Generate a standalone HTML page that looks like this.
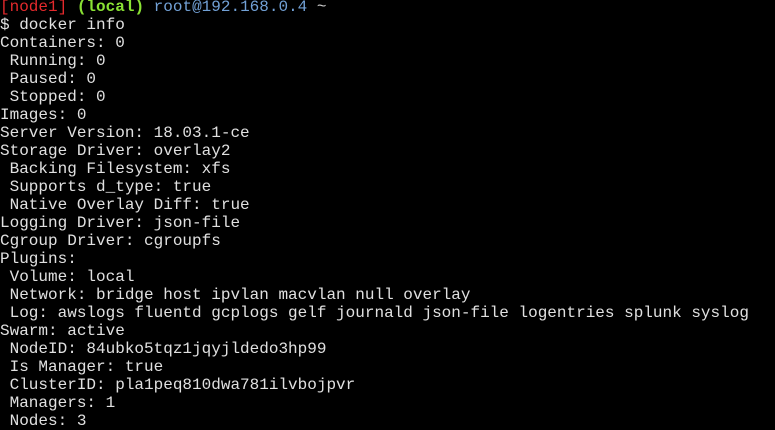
<!DOCTYPE html>
<html><head><style>
html,body{margin:0;padding:0;background:#000;width:775px;height:428px;overflow:hidden}
pre{margin:0;position:absolute;top:-2px;left:0;font-family:"Liberation Mono",monospace;font-size:16px;line-height:18px;color:#e0e0e0}
.r{color:#e3292c}.g{color:#8ae234;font-weight:bold}.b{color:#72a1d6}.w{color:#ccc}
</style></head><body><pre><span class="r">[node1]</span> <span class="g">(local)</span> <span class="b">root@192.168.0.4</span> <span class="w">~</span>
$ docker info
Containers: 0
 Running: 0
 Paused: 0
 Stopped: 0
Images: 0
Server Version: 18.03.1-ce
Storage Driver: overlay2
 Backing Filesystem: xfs
 Supports d_type: true
 Native Overlay Diff: true
Logging Driver: json-file
Cgroup Driver: cgroupfs
Plugins:
 Volume: local
 Network: bridge host ipvlan macvlan null overlay
 Log: awslogs fluentd gcplogs gelf journald json-file logentries splunk syslog
Swarm: active
 NodeID: 84ubko5tqz1jqyjldedo3hp99
 Is Manager: true
 ClusterID: pla1peq810dwa781ilvbojpvr
 Managers: 1
 Nodes: 3</pre></body></html>
